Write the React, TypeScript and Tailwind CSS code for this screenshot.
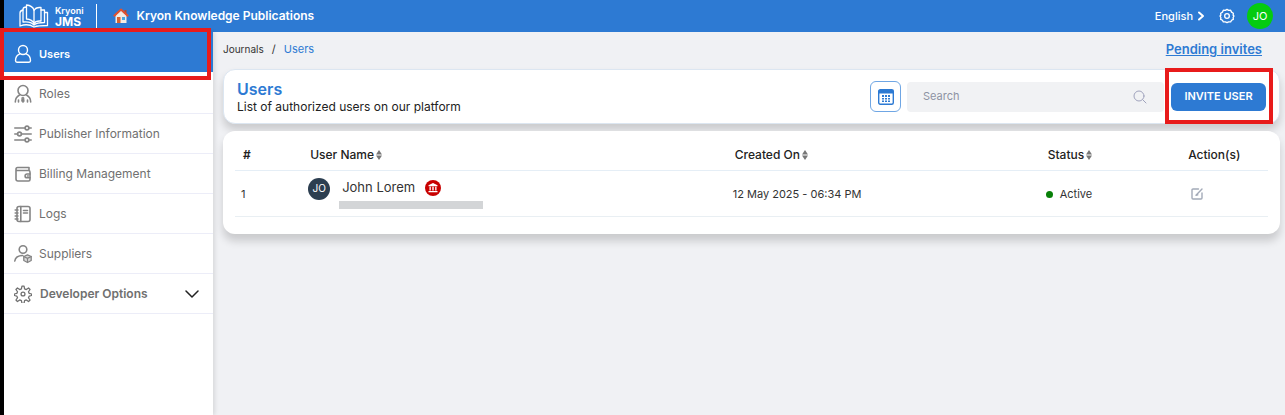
import React from "react";

type IconProps = { className?: string };

function Svg({ className = "", box = "0 0 24 24", sw = 1.6, children }: { className?: string; box?: string; sw?: number; children: React.ReactNode }) {
  return (
    <svg viewBox={box} className={"shrink-0 " + className} fill="none" stroke="currentColor" strokeWidth={sw} strokeLinecap="round" strokeLinejoin="round" aria-hidden="true">
      {children}
    </svg>
  );
}

const BookLogo = () => (
  <Svg box="0 0 30 24" className="w-[30px] h-6" sw={1.3}>
    <path d="M7.500 1c3.500.3 6.500 2 7.500 5v13.500c-1-2.500-4-4.300-7.500-4.500z" />
    <path d="M15 6.500c1-2 3-3 5.500-3h1.500V17h-1.500c-2.500 0-4.500.8-5.500 2.500" />
    <path d="M7.500 3C5.500 3 4 4 4 5.500V18c4-.5 8.500 0 11 3 2-2 5-2.500 10.500-2.500V6H22" />
    <path d="M4 6C2 6.500 1 7.500 1 9v13c4-1.500 10-1.500 14 1 3.500-1.300 8-1.500 13.500-1.500V8.500h-3" />
  </Svg>
);

const House = () => (
  <svg viewBox="0 0 16 16" className="w-4 h-4 shrink-0" aria-hidden="true">
    <path d="M11.500 2h2v4h-2z" fill="#b64a2c" />
    <path d="M2.500 7.500L8 2.500l5.500 5V15h-11z" fill="#f5ece4" />
    <path d="M4 9h3.500v6H4z" fill="#d9622f" />
    <path d="M9 9h3v3H9z" fill="#4aa8e0" />
    <path d="M.8 8.200L8 1.500l7.200 6.700" fill="none" stroke="#e4502c" strokeWidth="2" strokeLinejoin="round" />
  </svg>
);

const UserIcon = () => (
  <Svg className="w-[18px] h-5" box="0 0 18 20" sw={1.4}>
    <circle cx="9" cy="6" r="4.500" />
    <path d="M5.800 9.800C3 11 1.500 13.500 1.500 16.500c0 1 .6 1.700 1.500 1.700h12c.9 0 1.500-.7 1.500-1.700 0-3-1.500-5.500-4.300-6.700" />
  </Svg>
);
const RolesIcon = () => (
  <Svg className="w-[18px] h-5" box="0 0 18 20" sw={1.6}>
    <circle cx="9" cy="6.500" r="5" />
    <path d="M5.500 11C3 12.300 1.300 14.500 1.300 18M12.500 11c2.500 1.300 4.200 3.500 4.200 7M4.500 18v-2M13.500 18v-2" />
    <path d="M8.200 13.500h1.600l.4 4L9 18.500 7.800 17.500z" fill="currentColor" strokeWidth=".8" />
  </Svg>
);
const SlidersIcon = () => (
  <Svg className="w-[18px] h-5" box="0 0 18 20" sw={1.6}>
    <path d="M.8 4h10.200M15 4h2.200M.8 10h2.700M7.500 10h9.700M.8 16h10.200M15 16h2.200" />
    <circle cx="13" cy="4" r="1.900" /><circle cx="5.500" cy="10" r="1.900" /><circle cx="13" cy="16" r="1.900" />
  </Svg>
);
const WalletIcon = () => (
  <Svg className="w-[18px] h-5" box="0 0 18 20" sw={1.6}>
    <path d="M2 5.500V15c0 1.200.8 2 2 2h10.500c.8 0 1.500-.7 1.500-1.500V8c0-.8-.7-1.500-1.500-1.500H3.500C2.600 6.500 2 6 2 5.200s.6-1.700 1.500-1.700H15v3" />
    <path d="M16 10h-3a1.900 1.900 0 0 0 0 3.800h3M13.500 12h.8" />
  </Svg>
);
const LogsIcon = () => (
  <Svg className="w-[18px] h-5" box="0 0 18 20" sw={1.6}>
    <rect x="3" y="2.500" width="13" height="15" rx="2" />
    <path d="M6.800 2.500v15M9.500 6.500h4M9.500 9h4M1.200 6H4M1.200 9H4M1.200 12H4M1.200 15H4" />
  </Svg>
);
const SuppliersIcon = () => (
  <Svg className="w-[18px] h-5" box="0 0 18 20" sw={1.6}>
    <circle cx="9" cy="5.500" r="3.800" />
    <path d="M.8 17c.5-3.500 3.500-5.500 8-5.500" />
    <path d="M13.500 10.800l3.700 1.700v4l-3.700 2-3.700-2v-4z" fill="currentColor" fillOpacity=".3" strokeWidth="1.300" />
    <path d="M9.800 12.500l3.700 1.900 3.700-1.900M13.500 14.400v4" strokeWidth="1.200" />
  </Svg>
);

const GearIcon = ({ className = "" }: IconProps) => (
  <Svg className={className} sw={1.7}>
    <circle cx="12" cy="12" r="2.600" />
    <path d="M10.600 1.500h2.800l.7 3.600 2.300 1 3-2.100 2 2-2.100 3 1 2.300 3.200.7v2l-3.200.7-1 2.300 2.100 3-2 2-3-2.100-2.300 1-.7 3.600h-2.800l-.7-3.600-2.300-1-3 2.100-2-2 2.100-3-1-2.300-3.200-.7v-2l3.200-.7 1-2.300L2.600 6l2-2 3 2.100 2.300-1z" />
  </Svg>
);
const CogBadge = () => (
  <Svg className="w-4 h-4" sw={2}>
    <circle cx="12" cy="12" r="3.500" />
    <path d="M9.500 3.500L12 2l2.500 1.500 3-.1 1.300 2.800 2.700 1.600-.3 3 1.300 1.200-1.300 2.200.3 2.800-2.700 1.400-1.300 2.500-3-.1L12 22l-2.500-1.200-3 .1-1.300-2.500L2.500 17l.3-2.800L1.500 12l1.300-1.200-.3-3 2.700-1.600 1.300-2.800z" />
  </Svg>
);

const SortIcon = () => (
  <svg viewBox="0 0 6 10" className="w-1.5 h-2.5 shrink-0" fill="#777" aria-hidden="true">
    <path d="M3 0l3 4.400H0zM3 10l3-4.400H0z" />
  </svg>
);

const nav = [
  { label: "Users", icon: <UserIcon />, active: true },
  { label: "Roles", icon: <RolesIcon />, active: false },
  { label: "Publisher Information", icon: <SlidersIcon />, active: false },
  { label: "Billing Management", icon: <WalletIcon />, active: false },
  { label: "Logs", icon: <LogsIcon />, active: false },
  { label: "Suppliers", icon: <SuppliersIcon />, active: false },
];

function Header() {
  return (
    <header className="h-8 bg-[#2d7ad3] text-white flex items-center pl-[15px] pr-3">
      <BookLogo />
      <div className="ml-1.5 flex flex-col font-semibold">
        <span className="text-[9px] leading-[11px]">Kryoni</span>
        <span className="text-xs leading-3 font-bold">JMS</span>
      </div>
      <div className="ml-3 w-px h-6 bg-white" />
      <div className="ml-4 flex items-center gap-2">
        <House />
        <span className="text-xs font-semibold">Kryon Knowledge Publications</span>
      </div>
      <div className="ml-auto flex items-center">
        <button type="button" className="flex items-center gap-1 text-[11px] font-medium">
          English
          <Svg className="w-2 h-2.5" box="0 0 8 10" sw={2}><path d="M2 1.500L6 5 2 8.500" /></Svg>
        </button>
        <button type="button" aria-label="Settings" className="ml-3.5"><CogBadge /></button>
        <button type="button" className="ml-3 w-[26px] h-[26px] rounded-full bg-[#05cb10] text-[11px]">JO</button>
      </div>
    </header>
  );
}

function Sidebar() {
  return (
    <nav className="relative w-[209px] shrink-0 bg-white text-[#707070] text-xs shadow-[2px_0_4px_rgba(0,0,0,0.10)]">
      <ul>
        {nav.map((n) => (
          <li key={n.label} className={n.active ? "bg-[#2d7ad3] text-white text-[11px] font-semibold border-b-2 border-white" : "border-b border-[#ecedf8]"}>
            <a href="#" className={n.active ? "h-10 pt-1 flex items-center gap-[7px] pl-2.5" : "h-[39px] flex items-center gap-[7px] pl-2.5"}>
              <span className={n.active ? "text-white" : "text-[#858585]"}>{n.icon}</span>
              {n.label}
            </a>
          </li>
        ))}
        <li className="border-b border-[#ecedf8]">
          <button type="button" className="w-full h-[39px] flex items-center gap-2 pl-2.5 pr-3.5 font-semibold">
            <GearIcon className="w-[18px] h-[18px]" />
            Developer Options
            <Svg className="ml-auto w-3.5 h-3.5 text-[#222]" box="0 0 14 14" sw={1.5}><path d="M1 4l6 6 6-6" /></Svg>
          </button>
        </li>
      </ul>
      <div className="absolute -left-1 right-0.5 -top-1 h-[52px] border-4 border-[#e81b1b] pointer-events-none" />
    </nav>
  );
}

function TitleCard() {
  return (
    <section className="h-[55px] flex items-center rounded-xl bg-white pl-[13px] pr-[13px] border border-[#dce6f1] shadow-[0_6px_8px_rgba(0,0,0,0.16)]">
      <div>
        <h1 className="text-base leading-5 font-semibold text-[#2d7ad3]">Users</h1>
        <p className="text-xs leading-4 text-[#222]">List of authorized users on our platform</p>
      </div>
      <button type="button" aria-label="Calendar view" className="ml-auto w-[31px] h-[31px] flex items-center justify-center rounded-md border border-[#6fa6e4] text-[#2d7ad3]">
        <svg viewBox="0 0 16 16" className="w-4 h-4" aria-hidden="true">
          <rect x=".7" y=".7" width="14.600" height="14.600" rx="1.500" fill="none" stroke="currentColor" strokeWidth="1.400" />
          <path d="M.7 1h14.600v3.500H.7zM4 6h2v2H4zM7 6h2v2H7zM10 6h2v2h-2zM4 9h2v1.600H4zM7 9h2v1.600H7zM10 9h2v1.600h-2zM4 11.500h2V13H4zM7 11.500h2V13H7zM10 11.500h2V13h-2z" fill="currentColor" />
        </svg>
      </button>
      <label className="ml-1.5 w-[257px] h-[30px] flex items-center rounded bg-[#f1f2f4] pl-4 pr-[17px]">
        <input type="text" placeholder="Search" aria-label="Search" className="flex-1 min-w-0 bg-transparent text-[11px] outline-none placeholder:text-[#8e93a3]" />
        <Svg className="w-3.5 h-3.5 text-[#a0a3bd]" box="0 0 14 14" sw={1}><circle cx="6" cy="6" r="5" /><path d="M9.700 9.700L13 13" /></Svg>
      </label>
      <div className="relative ml-[7px]">
        <button type="button" className="block w-[95px] h-7 rounded-md bg-[#2d7ad3] text-white text-[11px] font-semibold">INVITE USER</button>
        <div className="absolute -left-1.5 -right-[7px] -top-[15px] -bottom-[13px] border-4 border-[#e81b1b] pointer-events-none" />
      </div>
    </section>
  );
}

function UsersTable() {
  return (
    <section className="mt-[7px] rounded-xl bg-white px-3 pt-2.5 pb-[17px] shadow-[0_7px_9px_rgba(0,0,0,0.16)]">
      <table className="w-full table-fixed border-collapse text-left text-[11px] text-[#333]">
        <colgroup>
          <col className="w-[6.500%]" />
          <col className="w-[41.100%]" />
          <col className="w-[30.300%]" />
          <col className="w-[13.600%]" />
          <col />
        </colgroup>
        <thead className="text-xs text-[#222]">
          <tr className="h-[29px] border-b border-[#e5eef6]">
            <th className="pl-2 font-semibold">#</th>
            <th className="pl-2 font-medium"><span className="flex items-center gap-0.5">User Name <SortIcon /></span></th>
            <th className="pl-2 font-medium"><span className="flex items-center gap-0.5">Created On <SortIcon /></span></th>
            <th className="pl-2 font-medium"><span className="flex items-center gap-0.5">Status <SortIcon /></span></th>
            <th className="pl-2 font-medium">Action(s)</th>
          </tr>
        </thead>
        <tbody>
          <tr className="h-[46px] border-b border-[#e9eff3]">
            <td className="pl-1.5 pt-0.5">1</td>
            <td className="pl-1.5">
              <div className="flex items-start">
                <span className="w-[22px] h-[22px] rounded-full bg-[#2c3e50] text-white text-[10px] flex items-center justify-center">JO</span>
                <div className="ml-[9px]">
                  <div className="pl-[3px] h-5 flex items-center gap-2.5 text-[13px]">
                    John Lorem
                    <svg viewBox="0 0 16 16" className="w-4 h-4" aria-hidden="true">
                      <circle cx="8" cy="8" r="8" fill="#c80000" />
                      <path d="M8 3l4.500 2.300v1h-9v-1zM4.500 6.800h1.300v3.700H4.500zM7.300 6.800h1.400v3.700H7.300zM10.200 6.800h1.300v3.700h-1.300zM3.500 11h9v1.200h-9z" fill="#fff" />
                    </svg>
                  </div>
                  <div className="mt-[3px] w-36 h-2 bg-[#d3d5d7]" />
                </div>
              </div>
            </td>
            <td className="pl-1.5 pt-0.5">12 May 2025 - 06:34 PM</td>
            <td className="pl-1.5 pt-0.5"><span className="flex items-center gap-[7px]"><span className="w-[7px] h-[7px] rounded-full bg-[#088008]" />Active</span></td>
            <td className="pl-[11px] pt-0.5">
              <button type="button" aria-label="Edit user" className="block text-[#a3aab8]">
                <Svg className="w-3 h-3" box="0 0 12 12" sw={1.4}><path d="M7.500 1H2C1.300 1 1 1.300 1 2v8c0 .7.300 1 1 1h8c.7 0 1-.3 1-1V5M5 7.200L11 1M5 7.200L6.800 6.800" /></Svg>
              </button>
            </td>
          </tr>
        </tbody>
      </table>
    </section>
  );
}

export default function App() {
  return (
    <div className="min-h-screen flex flex-col bg-[#f0f1f4] border-l-4 border-black font-['Inter',sans-serif]">
      <Header />
      <div className="flex flex-1">
        <Sidebar />
        <main className="flex-1 min-w-0 pl-2.5 pr-[5px]">
          <div className="h-[37px] flex items-center justify-between pr-[18px] pb-0.5">
            <nav aria-label="Breadcrumb" className="flex items-center gap-2 text-[11px] text-[#333]">
              <a href="#" className="text-[10px]">Journals</a>
              <span>/</span>
              <a href="#" className="text-[#2d7ad3]">Users</a>
            </nav>
            <a href="#" className="text-[13px] font-semibold text-[#2d7ad3] underline">Pending invites</a>
          </div>
          <TitleCard />
          <UsersTable />
        </main>
      </div>
    </div>
  );
}
